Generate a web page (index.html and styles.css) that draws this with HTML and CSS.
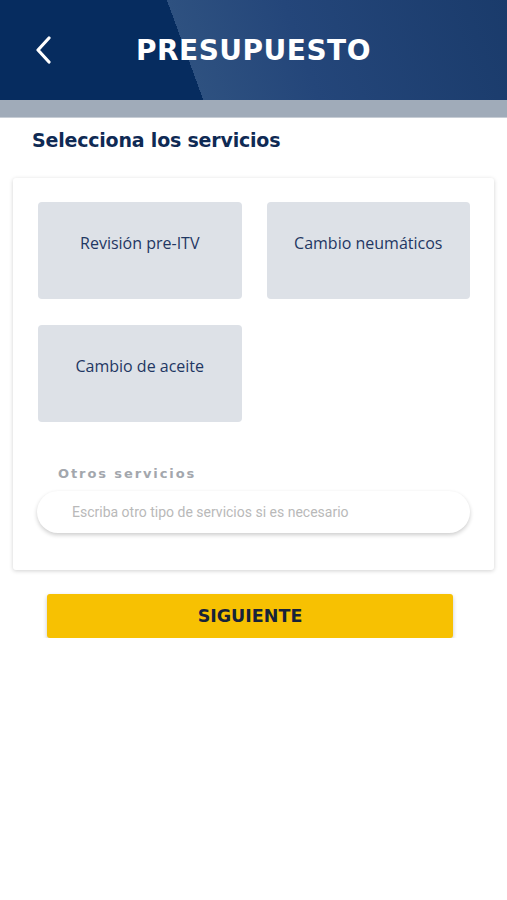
FILE: index.html
```html
<!DOCTYPE html>
<html lang="es">
<head>
    <meta charset="UTF-8">
    <meta name="viewport" content="width=device-width, initial-scale=1.0">
    <title>Presupuesto</title>
    <link rel="stylesheet" href="styles.css">
</head>
<body>
    <header class="topbar">
        <button class="back" aria-label="Volver">
            <svg width="18" height="28" viewBox="0 0 18 28">
                <path d="M15 2 L4 14 L15 26" fill="none" stroke="#ffffff" stroke-width="3.2" stroke-linecap="round" stroke-linejoin="round"/>
            </svg>
        </button>
        <h1>PRESUPUESTO</h1>
    </header>
    <div class="subbar"></div>

    <h2 class="section-title">Selecciona los servicios</h2>

    <div class="card">
        <div class="services">
            <div class="service">Revisión pre-ITV</div>
            <div class="service">Cambio neumáticos</div>
            <div class="service">Cambio de aceite</div>
        </div>

        <label class="other-label" for="otros">Otros servicios</label>
        <input class="other-input" id="otros" type="text" placeholder="Escriba otro tipo de servicios si es necesario">
    </div>

    <button class="next">SIGUIENTE</button>
</body>
</html>
```

FILE: styles.css
```css
body {
    margin: 0;
    padding: 0;
    background-color: #ffffff;
    font-family: "DejaVu Sans", sans-serif;
}

.topbar {
    height: 100px;
    display: flex;
    align-items: center;
    background: linear-gradient(70deg, #062c5f 0, #062c5f 191px, #2e5180 191px, #24467a 300px, #1a3b6b 100%);
}

.back {
    background: none;
    border: none;
    padding: 0;
    margin-left: 34px;
    width: 20px;
    height: 30px;
    display: flex;
    align-items: center;
    cursor: pointer;
}

.topbar h1 {
    flex: 1;
    margin: 0;
    padding-right: 54px;
    text-align: center;
    color: #ffffff;
    font-size: 28px;
    font-weight: bold;
    letter-spacing: 0.5px;
}

.subbar {
    height: 17px;
    background-color: #a0abb9;
    border-bottom: 1px solid #c7cdd5;
}

.section-title {
    margin: 11px 0 0 32px;
    color: #0f2a54;
    font-size: 19px;
    font-weight: bold;
    letter-spacing: -0.2px;
}

.card {
    margin: 27px 13px 0 13px;
    padding: 24px 24px 37px 25px;
    background-color: #ffffff;
    border-radius: 3px;
    box-shadow: 0 1px 4px rgba(0, 0, 0, 0.18);
    display: flex;
    flex-direction: column;
}

.services {
    display: grid;
    grid-template-columns: 1fr 1fr;
    column-gap: 25px;
    row-gap: 26px;
}

.service {
    height: 97px;
    box-sizing: border-box;
    padding-bottom: 15px;
    display: flex;
    align-items: center;
    justify-content: center;
    background-color: #dde1e7;
    border-radius: 4px;
    color: #1f3763;
    font-family: "Open Sans", sans-serif;
    font-size: 16px;
}

.other-label {
    margin: 44px 0 0 20px;
    color: #a3a7ad;
    font-size: 13px;
    font-weight: bold;
    letter-spacing: 1.9px;
}

.other-input {
    margin: 10px 0 0 -1px;
    height: 42px;
    box-sizing: border-box;
    padding: 0 35px;
    border: none;
    border-radius: 21px;
    background-color: #ffffff;
    box-shadow: 0 2px 4px rgba(0, 0, 0, 0.2);
    font-family: Roboto, sans-serif;
    font-size: 14px;
    outline: none;
}

.other-input::placeholder {
    color: #b9b9b9;
}

.next {
    display: block;
    margin: 24px 0 0 47px;
    width: 406px;
    height: 44px;
    border: none;
    border-radius: 3px;
    background-color: #f7c102;
    box-shadow: 0 2px 4px rgba(0, 0, 0, 0.22);
    color: #17233a;
    font-family: "DejaVu Sans", sans-serif;
    font-size: 17.5px;
    font-weight: bold;
    cursor: pointer;
}
```
